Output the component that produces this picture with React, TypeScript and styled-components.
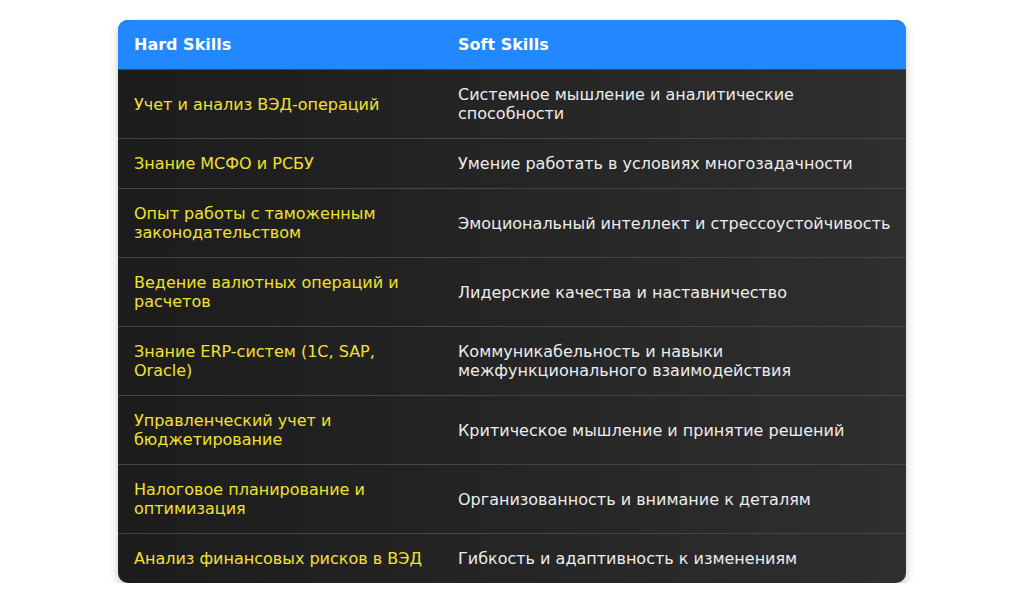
import React from "react";
import styled, { createGlobalStyle } from "styled-components";

const rows: [string, string][] = [
  ["Учет и анализ ВЭД-операций", "Системное мышление и аналитические способности"],
  ["Знание МСФО и РСБУ", "Умение работать в условиях многозадачности"],
  ["Опыт работы с таможенным законодательством", "Эмоциональный интеллект и стрессоустойчивость"],
  ["Ведение валютных операций и расчетов", "Лидерские качества и наставничество"],
  ["Знание ERP-систем (1С, SAP, Oracle)", "Коммуникабельность и навыки межфункционального взаимодействия"],
  ["Управленческий учет и бюджетирование", "Критическое мышление и принятие решений"],
  ["Налоговое планирование и оптимизация", "Организованность и внимание к деталям"],
  ["Анализ финансовых рисков в ВЭД", "Гибкость и адаптивность к изменениям"],
];

const GlobalStyle = createGlobalStyle`
  body {
    margin: 0;
    background: #ffffff;
    font-family: "DejaVu Sans", Verdana, sans-serif;
  }
`;

const Page = styled.div`
  display: flex;
  justify-content: center;
  padding-top: 20px;
`;

const Card = styled.div`
  width: 788px;
  border-radius: 10px;
  overflow: hidden;
  background: linear-gradient(90deg, #1c1c1c 0%, #252525 50%, #2f2f2f 100%);
  box-shadow: 0 4px 10px rgba(0, 0, 0, 0.22);
`;

const Row = styled.div<{ $head?: boolean }>`
  display: grid;
  grid-template-columns: 324px 1fr;
  align-items: center;
  background: ${(p) => (p.$head ? "#2288ff" : "transparent")};
  & + & {
    border-top: ${(p) => (p.$head ? "none" : "1px solid #454545")};
  }
`;

const Cell = styled.div<{ $tone: "head" | "hard" | "soft" }>`
  padding: 15px ${(p) => (p.$tone === "hard" ? "16px" : "8px")} 15px 16px;
  font-size: 16px;
  line-height: 19px;
  font-weight: ${(p) => (p.$tone === "head" ? 700 : 400)};
  color: ${(p) =>
    p.$tone === "head" ? "#ffffff" : p.$tone === "hard" ? "#f2e030" : "#ececec"};
`;

export default function App() {
  return (
    <>
      <GlobalStyle />
      <Page>
        <Card>
          <Row $head>
            <Cell $tone="head">Hard Skills</Cell>
            <Cell $tone="head">Soft Skills</Cell>
          </Row>
          {rows.map(([hard, soft], i) => (
            <Row key={i}>
              <Cell $tone="hard">{hard}</Cell>
              <Cell $tone="soft">{soft}</Cell>
            </Row>
          ))}
        </Card>
      </Page>
    </>
  );
}
